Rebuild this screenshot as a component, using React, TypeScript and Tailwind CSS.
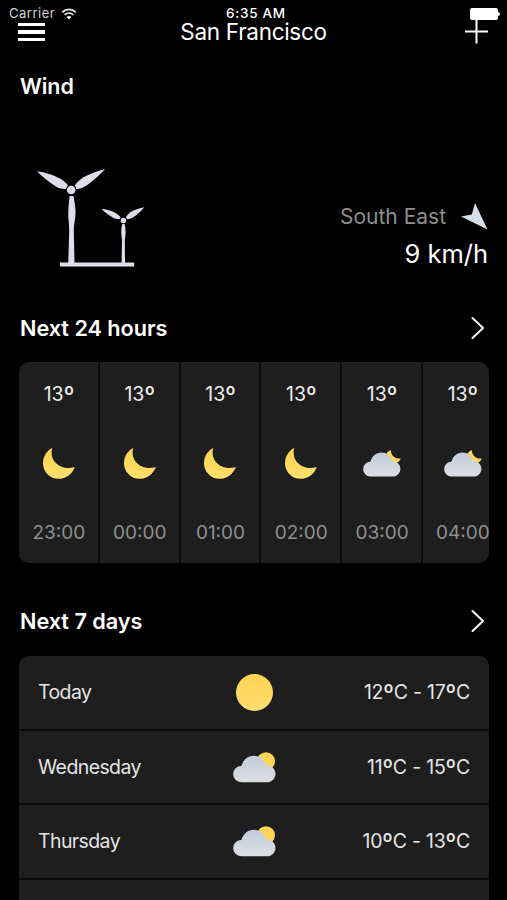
const hours = [
  { temp: "13º", time: "23:00", icon: "moon" },
  { temp: "13º", time: "00:00", icon: "moon" },
  { temp: "13º", time: "01:00", icon: "moon" },
  { temp: "13º", time: "02:00", icon: "moon" },
  { temp: "13º", time: "03:00", icon: "cloudMoon" },
  { temp: "13º", time: "04:00", icon: "cloudMoon" },
];

const days = [
  { name: "Today", icon: "sun", range: "12ºC - 17ºC" },
  { name: "Wednesday", icon: "cloudSun", range: "11ºC - 15ºC" },
  { name: "Thursday", icon: "cloudSun", range: "10ºC - 13ºC" },
];

const WifiIcon = () => (
  <svg className="w-4 h-3" viewBox="0 0 16 12" fill="none" stroke="#e8e8e8" strokeWidth="1.7">
    <path d="M1.2 4.3C5 .5 11 .5 14.8 4.3" />
    <path d="M3.6 6.8c2.500-2.400 6.300-2.400 8.800 0" />
    <path d="M8 11.400 5.600 8.900c1.400-1.300 3.400-1.300 4.800 0z" fill="#fff" stroke="none" />
  </svg>
);

const Chevron = () => (
  <svg className="w-[14px] h-6" viewBox="0 0 14 24" fill="none" stroke="#fff" strokeWidth="2" strokeLinecap="round" strokeLinejoin="round">
    <path d="M1.500 2 12 12 1.500 22" />
  </svg>
);

const Turbines = () => (
  <svg className="w-[110px] h-[100px]" viewBox="36 168 110 100" fill="#dedeea">
    <path d="M68.300 263l.9-32c.1-8-1.200-12-.9-19 .2-6 .7-11 1.400-16h3.800c.9 5 1.900 10 2 16 .1 7-1.800 12-1.700 19l.7 32z" />
    <path d="M60 262.500h74.200v4H60z" />
    <path d="M37 171.200C45 172.300 54 175 60.500 178.800 64 181 66.800 183.500 67.800 185.300L65.800 189C62 189.300 58.500 188.300 55.500 186.300 48.500 181.800 42 176.500 37 171.200z" />
    <path d="M105.200 169C97 171.200 89 174 83.500 177.300 79.500 180 76.800 182.500 74.800 185.500L76.500 189C80.500 189 84.500 187 88 184.500 94.500 179.800 100 174.500 105.200 169z" />
    <circle cx="71.200" cy="190" r="4.300" />
    <path d="M121.600 263l.4-23c-.8-5-1.200-11 .2-16h2.400c1.400 5 1.200 11 .2 16l.2 23z" />
    <path d="M101.500 208.700c6 .8 11 2.300 14.500 4.500 2.500 1.600 4 2.800 4.600 4.500l-1.200 1.500c-2.800 0-5-.7-7.500-2.200-3.500-2.200-7.500-5-10.400-8.300z" />
    <path d="M144.300 207.300c-6 1.400-10.800 2.800-14 5-2 1.500-3.500 3.400-4.300 5.200l1.200 1.700c2.500-.2 4.500-1 6.800-2.500 3.300-2.200 7.500-5.900 10.300-9.400z" />
    <circle cx="123.400" cy="220.500" r="2.700" />
  </svg>
);

const CloudPath = () => (
  <path d="M8.200 30.300A8.150 8.150 0 0 1 8.400 14C10.300 7.600 15 3.800 20.800 3.800c5.800 0 10.500 3.700 12.300 9.400 5.400.2 9.400 3.800 9.400 8.500s-3.700 8.600-8.700 8.600z" fill="url(#cloud)" />
);

const WeatherIcon = ({ name }: { name: string }) => {
  if (name === "moon") {
    return (
      <svg className="w-8 h-[31px]" viewBox="0 0 32 31">
        <path d="M9.300 0C3.800 2.600 0 8.500 0 15.200 0 23.900 6.900 30.800 15.600 30.800c7.200 0 13.400-4.500 16.200-11.900-2.200.8-4.400 1.100-6.600 1.100C16 20 8.600 13.500 8.600 4.800c0-1.700.2-3.300.7-4.800z" fill="url(#sun)" />
      </svg>
    );
  }
  if (name === "sun") {
    return <div className="w-[37px] h-[37px] rounded-full bg-linear-to-b from-[#ffd451] to-[#ffdf70]" />;
  }
  if (name === "cloudMoon") {
    return (
      <svg className="w-[38px] h-[27px]" viewBox="0 0 38 27">
        <path d="M27.800 0C26 .8 24.500 2 23.400 3.500L29 13h4.500c2-.8 3.500-2.500 4.200-4.500-5.200.8-9.900-3-9.900-8.500z" fill="#ffd65a" />
        <g transform="translate(0 -1) scale(.88 .91)">
          <CloudPath />
        </g>
      </svg>
    );
  }
  return (
    <svg className="w-[43px] h-[31px] mt-px" viewBox="0 0 43 31">
      <circle cx="33" cy="9.200" r="9" fill="#ffd65a" />
      <CloudPath />
    </svg>
  );
};

// The degree mark is set a little larger than the digits around it
const Temperature = ({ value }: { value: string }) => (
  <>
    {value.split(/(º)/).map((part, i) =>
      part === "º" ? (
        <span key={i} className="relative top-[2px] text-[1.2em] leading-none">{part}</span>
      ) : (
        part
      )
    )}
  </>
);

const SectionTitle = ({ children }: { children: string }) => (
  <div className="flex items-center justify-between h-[30px] pl-5 pr-[22px]">
    <h2 className="text-[21.7px] font-semibold tracking-[-0.05px]">{children}</h2>
    <Chevron />
  </div>
);

export default function App() {
  return (
    <div className="w-[507px] h-[900px] overflow-hidden bg-black text-white font-['Inter',sans-serif]">
      <svg className="absolute w-0 h-0">
        <defs>
          <linearGradient id="cloud" x1="0" y1="0" x2="0" y2="1">
            <stop offset="0" stopColor="#c2ccda" />
            <stop offset="1" stopColor="#dddee3" />
          </linearGradient>
          <linearGradient id="sun" x1="0" y1="0" x2="0" y2="1">
            <stop offset="0" stopColor="#ffd34f" />
            <stop offset="1" stopColor="#ffdf6d" />
          </linearGradient>
        </defs>
      </svg>

      <div className="grid grid-cols-3 items-center h-5 pt-[7px] pl-[9px] pr-[7px] text-[13px] leading-[13px]">
        <div className="flex items-center gap-[6px] text-[#d4d4d4]">
          <span className="tracking-[0.5px]">Carrier</span>
          <WifiIcon />
        </div>
        <span className="pl-[3px] text-center text-[13.5px] font-medium tracking-[0.7px]">6:35 AM</span>
        <div className="flex items-center justify-end">
          <div className="w-7 h-3 rounded-[2px] bg-white" />
          <div className="w-[2px] h-1 rounded-r bg-white" />
        </div>
      </div>

      <header className="grid grid-cols-3 items-center h-6 pl-[18px] pr-[19px]">
        <div className="flex flex-col gap-1">
          <div className="w-[27px] h-[3.5px] bg-white" />
          <div className="w-[27px] h-[3.5px] bg-white" />
          <div className="w-[27px] h-[3.5px] bg-white" />
        </div>
        <h1 className="pl-px text-center text-[22.5px] leading-6 tracking-[-0.3px] whitespace-nowrap">San Francisco</h1>
        <svg className="w-[23px] h-6 justify-self-end" viewBox="0 0 23 24" stroke="#fff" strokeWidth="2">
          <path d="M0 11.500h23M11.500 0v23.500" />
        </svg>
      </header>

      <h2 className="pl-5 mt-[27px] text-[21.5px] leading-[30px] font-semibold tracking-[-0.1px]">Wind</h2>
      <div className="flex justify-between mt-[67px] pl-9 pr-[19px] h-[100px]">
        <Turbines />
        <div className="flex flex-col items-end pt-[34px]">
          <div className="flex items-center gap-[15px] h-7 text-[21px] text-[#8e8e8e]">
            <span className="pt-px">South East</span>
            <svg className="w-[27px] h-[27px]" viewBox="0 0 27 27">
              <path d="M14 0 26.500 26.500 0 13.500 10.800 11.500z" fill="#d5dde7" />
            </svg>
          </div>
          <p className="mt-[7px] text-[25.5px] leading-[34px]">9 km/h</p>
        </div>
      </div>

      <div className="mt-[45px]">
        <SectionTitle>Next 24 hours</SectionTitle>
      </div>
      <div className="flex gap-[2px] mt-[19px] mx-[19px] w-[470px] h-[201px] overflow-hidden rounded-[10px] bg-[#0a0a0a]">
        {hours.map((hour) => (
          <div key={hour.time} className="flex flex-col items-center justify-between w-[78.8px] shrink-0 pt-[19px] pb-[18px] pl-px bg-[#1e1e1e]">
            <span className="h-6 text-[19.5px] leading-6 text-[#ececec]">
              <Temperature value={hour.temp} />
            </span>
            <WeatherIcon name={hour.icon} />
            <span className="text-[19px] leading-6 text-[#8f8f8f]">{hour.time}</span>
          </div>
        ))}
      </div>

      <div className="mt-[43px]">
        <SectionTitle>Next 7 days</SectionTitle>
      </div>
      <div className="flex flex-col gap-[2px] mt-5 mx-[19px] w-[470px] overflow-hidden rounded-t-[10px] bg-[#0a0a0a]">
        {days.map((day) => (
          <div key={day.name} className="grid grid-cols-3 items-center h-[72.5px] px-[19px] bg-[#1e1e1e] text-[19.5px] text-[#e4e4e4]">
            <span className="pt-px tracking-[-0.6px]">{day.name}</span>
            <div className="justify-self-center">
              <WeatherIcon name={day.icon} />
            </div>
            <span className="pt-px text-right tracking-[-0.2px] whitespace-nowrap">
              <Temperature value={day.range} />
            </span>
          </div>
        ))}
        <div className="h-[72px] bg-[#1e1e1e]" />
      </div>
    </div>
  );
}
